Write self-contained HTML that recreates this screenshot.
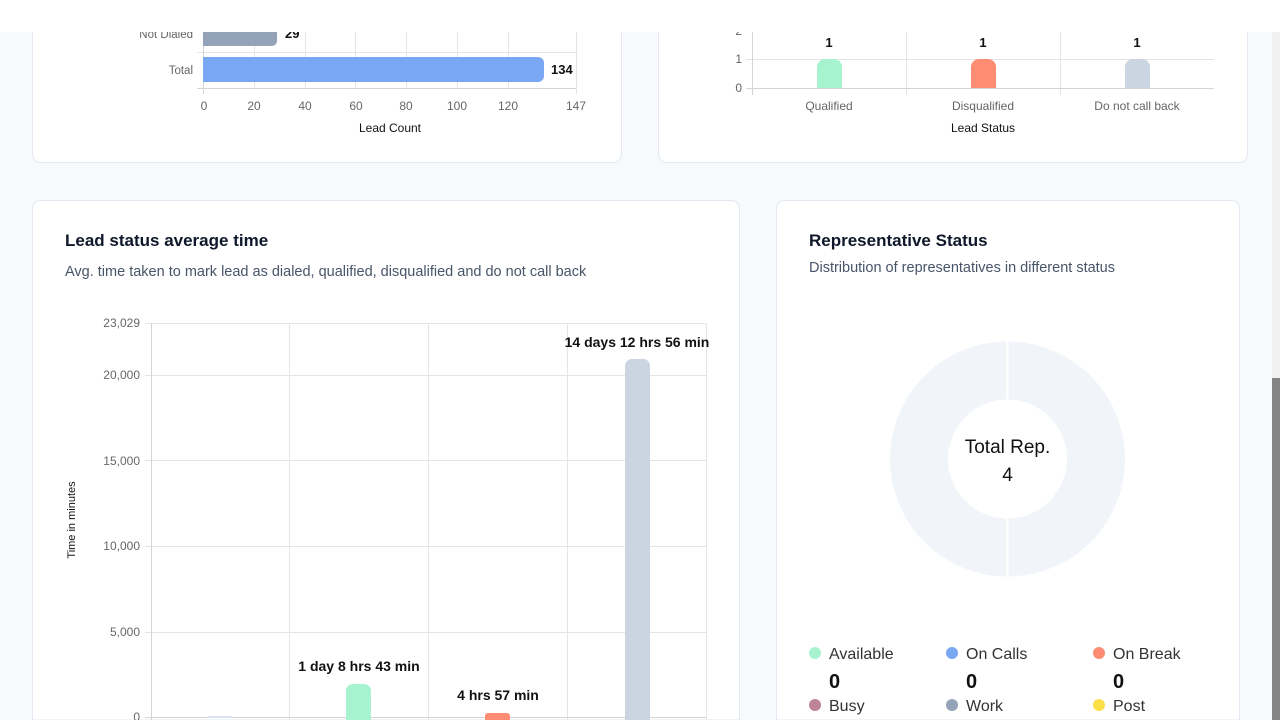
<!DOCTYPE html>
<html><head><meta charset="utf-8"><style>
html,body{margin:0;padding:0;width:1280px;height:720px;overflow:hidden;background:#f8f9fb;font-family:"Liberation Sans",sans-serif;}
svg{position:absolute;left:0;top:0}
</style></head><body>
<svg width="1280" height="720" viewBox="0 0 1280 720" font-family="Liberation Sans, sans-serif">
<rect x="0" y="0" width="1280" height="720" fill="#f8f9fb"/>
<rect x="32.5" y="-20" width="589" height="182.5" rx="8" fill="#fff" stroke="#e2e8f0"/>
<rect x="658.5" y="-20" width="589" height="182.5" rx="8" fill="#fff" stroke="#e2e8f0"/>
<path d="M32.5 720 V208.5 a8 8 0 0 1 8 -8 H731.5 a8 8 0 0 1 8 8 V720 Z" fill="#fff" stroke="#e2e8f0"/>
<path d="M776.5 720 V208.5 a8 8 0 0 1 8 -8 H1231.5 a8 8 0 0 1 8 8 V720 Z" fill="#fff" stroke="#e2e8f0"/>
<rect x="1272" y="32" width="8" height="688" fill="#f1f1f1"/>
<rect x="1272" y="378" width="8" height="342" fill="#858585"/>

<g stroke="#e5e5e5" stroke-width="1">
<line x1="254.5" y1="20" x2="254.5" y2="88"/><line x1="305.5" y1="20" x2="305.5" y2="88"/>
<line x1="355.5" y1="20" x2="355.5" y2="88"/><line x1="406.5" y1="20" x2="406.5" y2="88"/>
<line x1="457.5" y1="20" x2="457.5" y2="88"/><line x1="508.5" y1="20" x2="508.5" y2="88"/>
<line x1="576.5" y1="20" x2="576.5" y2="94"/>
<line x1="197" y1="52.5" x2="576" y2="52.5"/>
</g>
<line x1="197" y1="88.5" x2="576" y2="88.5" stroke="#d4d4d4"/>
<line x1="203.5" y1="20" x2="203.5" y2="94" stroke="#d4d4d4"/>
<path d="M203 20 H272 a5 5 0 0 1 5 5 V41 a5 5 0 0 1 -5 5 H203 Z" fill="#94a3b8"/>
<path d="M203 57 H538 a6 6 0 0 1 6 6 V76 a6 6 0 0 1 -6 6 H203 Z" fill="#7aa7f3"/>
<text x="193" y="38" font-size="11.5" fill="#666" text-anchor="end">Not Dialed</text>
<text x="193" y="74" font-size="11.5" fill="#666" text-anchor="end">Total</text>
<text x="285" y="38" font-size="13" font-weight="bold" fill="#111">29</text>
<text x="551" y="74" font-size="13" font-weight="bold" fill="#111">134</text>
<g font-size="12" fill="#666" text-anchor="middle">
<text x="204" y="110">0</text><text x="254" y="110">20</text><text x="305" y="110">40</text><text x="356" y="110">60</text><text x="406" y="110">80</text><text x="457" y="110">100</text><text x="508" y="110">120</text><text x="576" y="110">147</text>
</g>
<text x="390" y="132" font-size="12" fill="#111" text-anchor="middle">Lead Count</text>

<g stroke="#e5e5e5">
<line x1="906.5" y1="32" x2="906.5" y2="95"/><line x1="1060.5" y1="32" x2="1060.5" y2="95"/>
<line x1="746" y1="59.5" x2="1214" y2="59.5"/>
</g>
<line x1="752.5" y1="32" x2="752.5" y2="95" stroke="#d4d4d4"/>
<line x1="746" y1="88.5" x2="1214" y2="88.5" stroke="#d4d4d4"/>
<path d="M817 88 V67 a8 8 0 0 1 8 -8 H834 a8 8 0 0 1 8 8 V88 Z" fill="#a7f3d0"/>
<path d="M971 88 V67 a8 8 0 0 1 8 -8 H988 a8 8 0 0 1 8 8 V88 Z" fill="#fd8c73"/>
<path d="M1125 88 V67 a8 8 0 0 1 8 -8 H1142 a8 8 0 0 1 8 8 V88 Z" fill="#cbd5e1"/>
<g font-size="13" font-weight="bold" fill="#111" text-anchor="middle">
<text x="829" y="47">1</text><text x="983" y="47">1</text><text x="1137" y="47">1</text></g>
<g font-size="12" fill="#666" text-anchor="end"><text x="742" y="63">1</text><text x="742" y="92">0</text><text x="742" y="35">2</text></g>
<g font-size="12" fill="#666" text-anchor="middle">
<text x="829" y="110">Qualified</text><text x="983" y="110">Disqualified</text><text x="1137" y="110">Do not call back</text></g>
<text x="983" y="132" font-size="12" fill="#111" text-anchor="middle">Lead Status</text>

<rect x="0" y="0" width="1280" height="32" fill="#fff"/>

<text x="65" y="246" font-size="17" font-weight="bold" fill="#0f172a">Lead status average time</text>
<text x="65" y="276" font-size="14.5" fill="#475569">Avg. time taken to mark lead as dialed, qualified, disqualified and do not call back</text>
<g stroke="#e5e5e5">
<line x1="289.5" y1="323" x2="289.5" y2="720"/><line x1="428.5" y1="323" x2="428.5" y2="720"/>
<line x1="567.5" y1="323" x2="567.5" y2="720"/><line x1="706.5" y1="323" x2="706.5" y2="720"/>
<line x1="145" y1="323.5" x2="706" y2="323.5"/><line x1="145" y1="375.5" x2="706" y2="375.5"/>
<line x1="145" y1="460.5" x2="706" y2="460.5"/><line x1="145" y1="546.5" x2="706" y2="546.5"/>
<line x1="145" y1="632.5" x2="706" y2="632.5"/>
</g>
<line x1="151.5" y1="323" x2="151.5" y2="720" stroke="#d4d4d4"/>
<line x1="145" y1="717.5" x2="706" y2="717.5" stroke="#d4d4d4"/>
<g font-size="12" fill="#666" text-anchor="end">
<text x="140" y="327">23,029</text><text x="140" y="379">20,000</text><text x="140" y="465">15,000</text><text x="140" y="550">10,000</text><text x="140" y="636">5,000</text><text x="140" y="721">0</text></g>
<text transform="translate(75,520) rotate(-90)" font-size="11" fill="#111" text-anchor="middle">Time in minutes</text>
<rect x="207" y="716" width="25" height="2" fill="#dbe4f3"/>
<path d="M346 720 V691 a7 7 0 0 1 7 -7 H364 a7 7 0 0 1 7 7 V720 Z" fill="#a7f3d0"/>
<path d="M485 720 V716 a3 3 0 0 1 3 -3 H507 a3 3 0 0 1 3 3 V720 Z" fill="#fd8c73"/>
<path d="M625 720 V366 a7 7 0 0 1 7 -7 H643 a7 7 0 0 1 7 7 V720 Z" fill="#cbd5e1"/>
<g font-size="14" font-weight="bold" fill="#111" text-anchor="middle">
<text x="359" y="671">1 day 8 hrs 43 min</text><text x="498" y="700">4 hrs 57 min</text><text x="637" y="347">14 days 12 hrs 56 min</text></g>

<text x="809" y="246" font-size="17" font-weight="bold" fill="#0f172a">Representative Status</text>
<text x="809" y="272" font-size="14.5" fill="#475569">Distribution of representatives in different status</text>
<circle cx="1007.5" cy="459" r="88.5" fill="none" stroke="#f1f5f9" stroke-width="58"/>
<line x1="1007.5" y1="341" x2="1007.5" y2="400" stroke="#fff" stroke-width="2"/>
<line x1="1007.5" y1="518" x2="1007.5" y2="577" stroke="#fff" stroke-width="2"/>
<text x="1007.5" y="453" font-size="19" fill="#111" text-anchor="middle">Total Rep.</text>
<text x="1007.5" y="481" font-size="19" fill="#111" text-anchor="middle">4</text>
<g font-size="16" fill="#333">
<circle cx="815" cy="653" r="6" fill="#a7f3d0"/><text x="829" y="659">Available</text>
<circle cx="952" cy="653" r="6" fill="#7aa7f3"/><text x="966" y="659">On Calls</text>
<circle cx="1099" cy="653" r="6" fill="#fd8c73"/><text x="1113" y="659">On Break</text>
<circle cx="815" cy="705" r="6" fill="#c08497"/><text x="829" y="711">Busy</text>
<circle cx="952" cy="705" r="6" fill="#94a3b8"/><text x="966" y="711">Work</text>
<circle cx="1099" cy="705" r="6" fill="#fde047"/><text x="1113" y="711">Post</text>
</g>
<g font-size="20" font-weight="bold" fill="#111">
<text x="829" y="688">0</text><text x="966" y="688">0</text><text x="1113" y="688">0</text></g>
</svg>
</body></html>
